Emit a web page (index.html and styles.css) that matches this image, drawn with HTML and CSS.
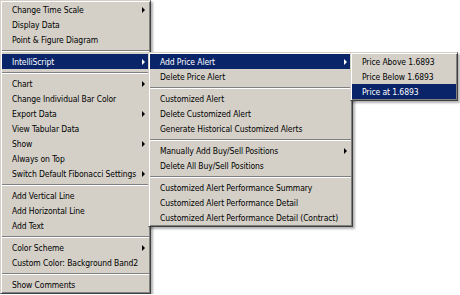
FILE: index.html
```html
<!DOCTYPE html>
<html>
<head>
  <title>Chart Menu</title>
  <link rel="stylesheet" href="styles.css">
</head>
<body>
  <div class="menu main-menu">
    <div class="item has-sub">Change Time Scale</div>
    <div class="item">Display Data</div>
    <div class="item">Point &amp; Figure Diagram</div>
    <div class="sep"></div>
    <div class="item has-sub active">IntelliScript</div>
    <div class="sep"></div>
    <div class="item has-sub">Chart</div>
    <div class="item">Change Individual Bar Color</div>
    <div class="item has-sub">Export Data</div>
    <div class="item">View Tabular Data</div>
    <div class="item has-sub">Show</div>
    <div class="item">Always on Top</div>
    <div class="item has-sub">Switch Default Fibonacci Settings</div>
    <div class="sep"></div>
    <div class="item">Add Vertical Line</div>
    <div class="item">Add Horizontal Line</div>
    <div class="item">Add Text</div>
    <div class="sep"></div>
    <div class="item has-sub">Color Scheme</div>
    <div class="item">Custom Color: Background Band2</div>
    <div class="sep"></div>
    <div class="item">Show Comments</div>
  </div>

  <div class="menu popup intelli-menu">
    <div class="item has-sub active">Add Price Alert</div>
    <div class="item">Delete Price Alert</div>
    <div class="sep"></div>
    <div class="item">Customized Alert</div>
    <div class="item">Delete Customized Alert</div>
    <div class="item">Generate Historical Customized Alerts</div>
    <div class="sep"></div>
    <div class="item has-sub">Manually Add Buy/Sell Positions</div>
    <div class="item">Delete All Buy/Sell Positions</div>
    <div class="sep"></div>
    <div class="item">Customized Alert Performance Summary</div>
    <div class="item">Customized Alert Performance Detail</div>
    <div class="item">Customized Alert Performance Detail (Contract)</div>
  </div>

  <div class="menu popup alert-menu">
    <div class="item">Price Above 1.6893</div>
    <div class="item">Price Below 1.6893</div>
    <div class="item active">Price at 1.6893</div>
  </div>
</body>
</html>
```

FILE: styles.css
```css
body {
  margin: 0;
  background-color: #fff;
  font-family: "DejaVu Sans Condensed", "DejaVu Sans", sans-serif;
  font-size: 8.5px;
  letter-spacing: -0.1px;
  color: #000;
}

.menu {
  box-sizing: border-box;
  background-color: #d4d0c8;
  border: 1px solid;
  border-color: #d4d0c8 #404040 #404040 #d4d0c8;
  padding: 1px;
  box-shadow: inset 1px 1px #fff, inset -1px -1px #808080, 2px 2px 2px rgba(0, 0, 0, 0.3);
}

.main-menu {
  width: 151px;
}

.popup {
  position: absolute;
  top: 52px;
}

.intelli-menu {
  left: 148px;
  width: 205px;
}

.alert-menu {
  left: 350px;
  width: 108px;
}

.item {
  display: flex;
  justify-content: space-between;
  align-items: center;
  height: 15px;
  padding: 0 4px 0 10px;
  white-space: nowrap;
}

.item.has-sub::after {
  content: "";
  border-left: 3px solid #000;
  border-top: 3px solid transparent;
  border-bottom: 3px solid transparent;
}

.item.active {
  background-color: #0a246a;
  color: #fff;
}

.item.active.has-sub::after {
  border-left-color: #fff;
}

.sep {
  height: 0;
  margin: 3px 0 2px;
  border-top: 1px solid #808080;
  border-bottom: 1px solid #fff;
}
```
